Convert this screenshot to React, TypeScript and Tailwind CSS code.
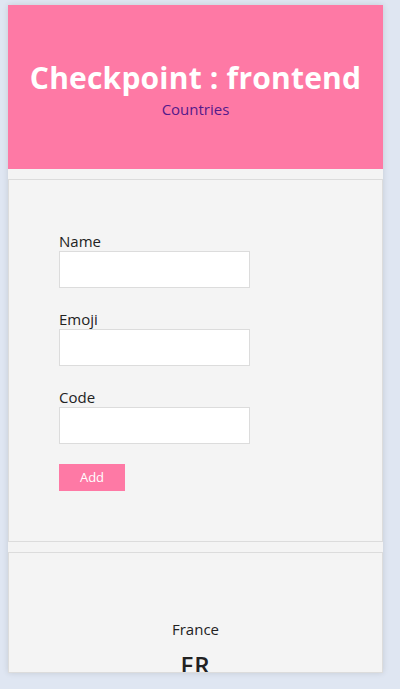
export default function App() {
  const font = { fontFamily: '"Open Sans", "Noto Sans", sans-serif' };
  return (
    <div className="min-h-[689px] bg-[#dfe6f2] pt-[5px]" style={font}>
      <div className="ml-[8px] w-[375px] h-[668px] overflow-hidden bg-[#f4f4f4] shadow-[0_0_6px_rgba(0,0,0,0.12)] flex flex-col">
        <header className="h-[164px] shrink-0 bg-[#fe79a5] flex flex-col items-center justify-center pt-[4px]">
          <h1 className="text-white font-bold text-[30px] leading-[36px] tracking-[0.2px]">Checkpoint : frontend</h1>
          <a className="text-[#551a8b] text-[15px] leading-[20px] mt-[3px]">Countries</a>
        </header>
        <div className="pt-[10px] flex flex-col gap-[10px]">
          <section className="border border-[#dcdcdc] bg-[#f4f4f4] pl-[50px] pt-[51px] pb-[50px]">
            <div className="flex flex-col">
              <label className="text-[15px] leading-[20px] text-[#222]">Name</label>
              <input className="w-[191px] h-[37px] bg-white border border-[#dcdcdc] outline-none" />
              <label className="mt-[21px] text-[15px] leading-[20px] text-[#222]">Emoji</label>
              <input className="w-[191px] h-[37px] bg-white border border-[#dcdcdc] outline-none" />
              <label className="mt-[21px] text-[15px] leading-[20px] text-[#222]">Code</label>
              <input className="w-[191px] h-[37px] bg-white border border-[#dcdcdc] outline-none" />
              <button className="mt-[20px] w-[66px] h-[27px] bg-[#fe79a5] text-white text-[13px] font-medium flex items-center justify-center">
                Add
              </button>
            </div>
          </section>
          <section className="border border-[#dcdcdc] bg-[#f4f4f4] h-[121px] overflow-hidden flex flex-col items-center pt-[65px]">
            <p className="text-[15px] leading-[22px] text-[#222]">France</p>
            <p className="mt-[10px] text-[24px] leading-[30px] font-semibold text-[#222] tracking-[1px]">FR</p>
          </section>
        </div>
      </div>
    </div>
  );
}
